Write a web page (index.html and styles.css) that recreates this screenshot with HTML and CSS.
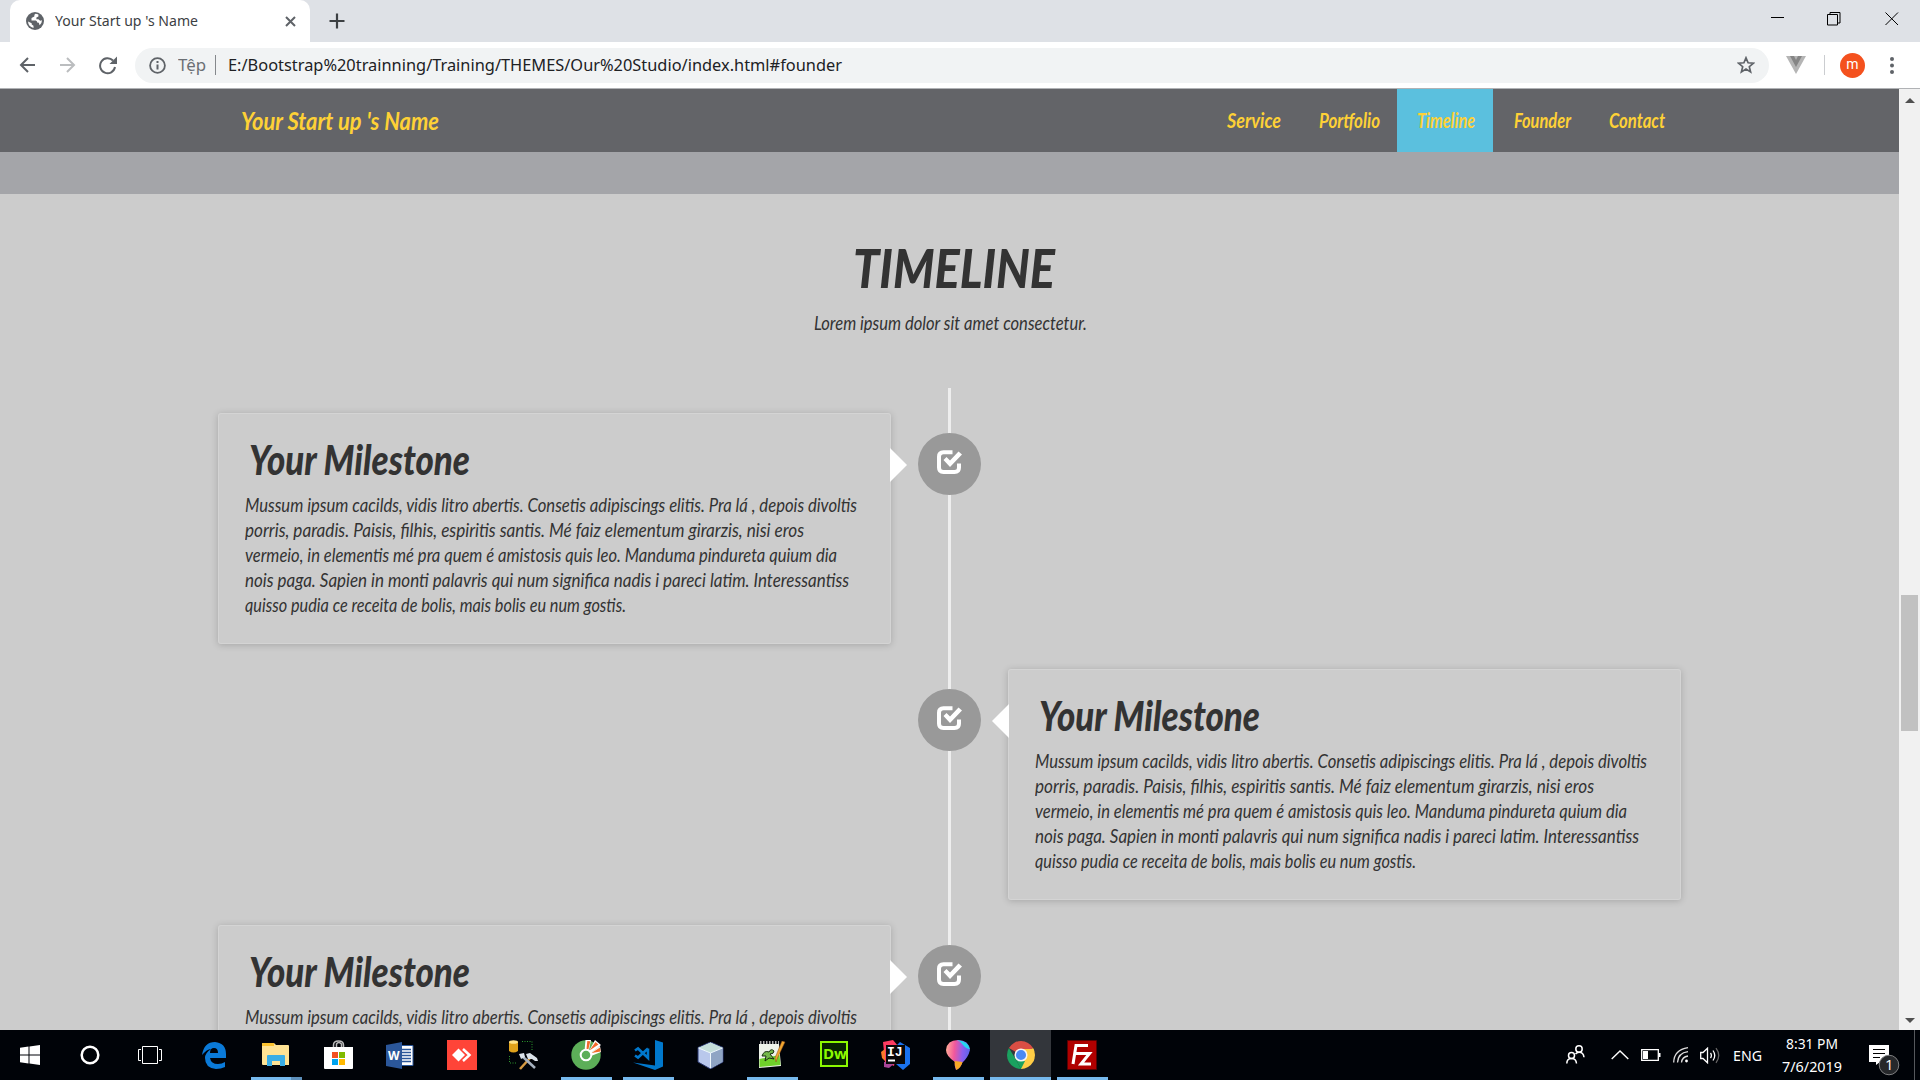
FILE: index.html
```html
<!DOCTYPE html>
<html lang="en">
<head>
<meta charset="utf-8">
<title>Your Start up 's Name</title>
<link rel="stylesheet" href="styles.css">
</head>
<body>
<svg width="0" height="0" class="defs">
  <symbol id="check" viewBox="0 0 26 24"><path d="M15.500 2.300H6.500Q2 2.300 2 6.800v10.700Q2 22 6.500 22h11Q22 22 22 17.500v-4" fill="none" stroke="#fff" stroke-width="4"/><path d="M6.500 10l3-3 3.500 3.500 8.500-9 3.500 3L13 17z" fill="#fff"/></symbol>
</svg>

<header class="tabstrip">
  <div class="tab">
    <svg width="18" height="18" viewBox="0 0 18 18"><circle cx="9" cy="9" r="9" fill="#5f6368"/><path d="M9.500 1.800Q8 2.500 8.300 4.500L5.500 6v2.500h4.200q1.500.3 1.500 2l1.600.2.800 2.500q2.400-2 2.400-5l-1.800.6-1.800-1.600h-2V5.500l2-1V2.600Q11 1.900 9.500 1.800zM2 9.500q.3 5.200 5.500 6.500V13.800L5.700 12.500v-1.300z" fill="#fff"/></svg>
    <span class="fit tab-title" data-w="143">Your Start up 's Name</span>
    <svg class="tab-close" width="11" height="11" viewBox="0 0 11 11"><path d="M1 1l9 9M10 1l-9 9" stroke="#5f6368" stroke-width="2"/></svg>
  </div>
  <svg class="plus" width="16" height="16" viewBox="0 0 16 16"><path d="M8 .5v15M.5 8h15" stroke="#3c4043" stroke-width="2.200"/></svg>
  <svg class="winctl" width="128" height="14" viewBox="0 0 128 14" fill="none" stroke="#000"><path d="M0 5.500h13M56.500 2.500h10v10.500h-10zM59 2.500v-2h10v10.500h-2.500M114.500.5l12.500 12.500M127 .5L114.500 13"/></svg>
</header>

<div class="toolbar">
  <svg class="arrows" width="98" height="20" viewBox="0 0 98 20" fill="none" stroke="#5f6368" stroke-width="2"><path d="M16 10H2M9 3l-7 7 7 7"/><path stroke="#bbbdbf" d="M41 10h14M48 3l7 7-7 7"/><path d="M94 5.500A7.500 7.500 0 1 0 96 12"/><path d="M98 1.500V9h-7.500z" fill="#5f6368" stroke="none"/></svg>
  <div class="omnibox">
    <svg width="17" height="17" viewBox="0 0 17 17"><circle cx="8.500" cy="8.500" r="7.400" fill="none" stroke="#5f6368" stroke-width="1.800"/><path d="M8.500 4v2M8.500 7.500v5" stroke="#5f6368" stroke-width="2"/></svg>
    <span class="fit scheme" data-w="28">Tệp</span>
    <i class="bar"></i>
    <span class="fit url" data-w="614">E:/Bootstrap%20trainning/Training/THEMES/Our%20Studio/index.html#founder</span>
    <svg class="star" width="18" height="18" viewBox="0 0 18 18"><path d="M9 1.800l2.100 5 5.300.4-4.100 3.500 1.300 5.200L9 13.100l-4.600 2.800 1.300-5.200L1.600 7.200l5.300-.4z" fill="none" stroke="#5f6368" stroke-width="1.700"/></svg>
  </div>
  <svg class="vue" width="20" height="18" viewBox="0 0 20 18"><path d="M0 0h20L10 18z" fill="#b5b5b5"/><path d="M4 0h4l2 4 2-4h4l-6 11z" fill="#858585"/></svg>
  <i class="split"></i>
  <b class="avatar">m</b>
  <svg class="dots" width="4" height="17" viewBox="0 0 4 17" fill="#5f6368"><circle cx="2" cy="2" r="2"/><circle cx="2" cy="8.500" r="2"/><circle cx="2" cy="15" r="2"/></svg>
</div>

<div class="viewport">
  <main class="page">
    <nav class="navbar">
      <span class="fit brand" data-w="198">Your Start up 's Name</span>
      <div class="links">
        <a class="link"><span class="fit" data-w="54">Service</span></a>
        <a class="link"><span class="fit" data-w="61">Portfolio</span></a>
        <a class="link active"><span class="fit" data-w="58">Timeline</span></a>
        <a class="link"><span class="fit" data-w="57">Founder</span></a>
        <a class="link"><span class="fit" data-w="56">Contact</span></a>
      </div>
    </nav>
    <div class="band"></div>
    <section class="section">
      <h2><span class="fit" data-w="202">TIMELINE</span></h2>
      <p class="lead"><span class="fit" data-w="273">Lorem ipsum dolor sit amet consectetur.</span></p>
      <div class="timeline">
        <div class="row">
          <article class="card">
            <h3><span class="fit" data-w="221">Your Milestone</span></h3>
            <p><span class="fit" data-w="612">Mussum ipsum cacilds, vidis litro abertis. Consetis adipiscings elitis. Pra lá , depois divoltis</span><br><span class="fit" data-w="559">porris, paradis. Paisis, filhis, espiritis santis. Mé faiz elementum girarzis, nisi eros</span><br><span class="fit" data-w="592">vermeio, in elementis mé pra quem é amistosis quis leo. Manduma pindureta quium dia</span><br><span class="fit" data-w="604">nois paga. Sapien in monti palavris qui num significa nadis i pareci latim. Interessantiss</span><br><span class="fit" data-w="381">quisso pudia ce receita de bolis, mais bolis eu num gostis.</span></p>
          </article>
          <div class="badge"><svg width="26" height="24"><use href="#check"/></svg></div>
        </div>
        <div class="row right">
          <article class="card">
            <h3><span class="fit" data-w="221">Your Milestone</span></h3>
            <p><span class="fit" data-w="612">Mussum ipsum cacilds, vidis litro abertis. Consetis adipiscings elitis. Pra lá , depois divoltis</span><br><span class="fit" data-w="559">porris, paradis. Paisis, filhis, espiritis santis. Mé faiz elementum girarzis, nisi eros</span><br><span class="fit" data-w="592">vermeio, in elementis mé pra quem é amistosis quis leo. Manduma pindureta quium dia</span><br><span class="fit" data-w="604">nois paga. Sapien in monti palavris qui num significa nadis i pareci latim. Interessantiss</span><br><span class="fit" data-w="381">quisso pudia ce receita de bolis, mais bolis eu num gostis.</span></p>
          </article>
          <div class="badge"><svg width="26" height="24"><use href="#check"/></svg></div>
        </div>
        <div class="row">
          <article class="card">
            <h3><span class="fit" data-w="221">Your Milestone</span></h3>
            <p><span class="fit" data-w="612">Mussum ipsum cacilds, vidis litro abertis. Consetis adipiscings elitis. Pra lá , depois divoltis</span></p>
          </article>
          <div class="badge"><svg width="26" height="24"><use href="#check"/></svg></div>
        </div>
      </div>
    </section>
  </main>
  <aside class="scrollbar">
    <svg width="10" height="5" viewBox="0 0 10 5"><path d="M0 5l5-5 5 5z" fill="#505050"/></svg>
    <i class="thumb"></i>
    <svg width="10" height="5" viewBox="0 0 10 5"><path d="M0 0l5 5 5-5z" fill="#505050"/></svg>
  </aside>
</div>

<footer class="taskbar">
  <div class="slot sys"><svg width="20" height="20" viewBox="0 0 20 20" fill="#fff"><path d="M0 2.800l8.500-1.200v8H0zM9.500 1.400L20 0v9.600H9.500zM0 10.500h8.500v8L0 17.300zM9.500 10.500H20V20L9.500 18.600z"/></svg></div>
  <div class="slot sys"><svg width="20" height="20" viewBox="0 0 20 20"><circle cx="10" cy="10" r="8.300" fill="none" stroke="#fff" stroke-width="2.500"/></svg></div>
  <div class="slot view"><svg width="24" height="18" viewBox="0 0 24 18" fill="none" stroke="#fff"><path d="M4.500.5h15v17h-15zM3 3.500H.5v11H3M21 3.500h2.500v11H21"/></svg></div>
  <div class="slot"><svg width="26" height="27" viewBox="0 0 26 27"><path d="M1 13Q3 0 14 0q11 1 11 12v4H9q1 6 8 6 4 0 7-2v5q-4 2-9 2Q4 26 4 16q0-5 6-9-4 0-9 6zM9 11h8q0-5-4-5-4 0-4 5z" fill="#0a7ad8"/></svg></div>
  <div class="slot open multi"><svg width="28" height="24" viewBox="0 0 28 24"><path d="M0 1q0-1 1-1h11l2 2h12q1 0 1 1v19H1q-1 0-1-1z" fill="#ffe394"/><path d="M0 1q0-1 1-1h11v3H0z" fill="#fcc32f"/><path d="M5 23V13q0-1 1-1h16q1 0 1 1v10h-5v-5h-8v5z" fill="#3aaee6"/></svg></div>
  <div class="slot"><svg width="29" height="30" viewBox="0 0 29 30"><path d="M9.500 8V5q0-4 5-4t5 4v3M12.500 7V4q2-3 5 0v4" fill="none" stroke="#bbb" stroke-width="1.500"/><path d="M0 7h29v21q0 1-1 1H1q-1 0-1-1z" fill="#fff"/><path d="M8 12h6v6H8z" fill="#f25022"/><path d="M15 12h6v6h-6z" fill="#7fba00"/><path d="M8 19h6v6H8z" fill="#00a4ef"/><path d="M15 19h6v6h-6z" fill="#ffb900"/></svg></div>
  <div class="slot"><svg width="28" height="27" viewBox="0 0 28 27"><path d="M13 3.500h14v20H13z" fill="#fff" stroke="#2b579a"/><path d="M16 7.500h9M16 10.500h9M16 13.500h9M16 16.500h9M16 19.500h9" stroke="#2b579a" stroke-width="1.500"/><path d="M0 3l16-3v27L0 24z" fill="#2b579a"/><text x="2" y="18" class="t-word">W</text></svg></div>
  <div class="slot"><svg width="30" height="30" viewBox="0 0 30 30"><path d="M0 0h30v30H0z" fill="#ff4438"/><path d="M5 15l6.500-6.500L18 15l-6.500 6.500z" fill="#fff"/><path d="M16 9l6.500 6-6.500 6" fill="none" stroke="#fff" stroke-width="2.500"/></svg></div>
  <div class="slot"><svg width="30" height="30" viewBox="0 0 30 30"><path d="M0 2v9q4.500 3 9 0V2z" fill="#e0a21b"/><ellipse cx="4.500" cy="2" rx="4.500" ry="1.800" fill="#ffe48b"/><path d="M13 1.500h10v10M.5 16v7h8" fill="none" stroke="#2d9a2d" stroke-dasharray="1 1.500"/><path d="M11 29l10-11" stroke="#d59a42" stroke-width="2.500"/><path d="M13 16l13 12" stroke="#a6b2c0" stroke-width="2.500"/><path d="M17 14l4-1 7 5 1 3-3 0-3-2-4 0z" fill="#dbe2ea"/><path d="M10 14l2 5 4-2-1-4z" fill="#dbe2ea"/></svg></div>
  <div class="slot open"><svg width="30" height="30" viewBox="0 0 30 30"><circle cx="15" cy="15" r="14.700" fill="#5cae58"/><path d="M13.500 11L14.500 0h5.500l-2 10zM18 11l6-11 6 5-10 8zM19 14l10-8 1 6-10 4z" fill="#fff"/><path d="M15.500 9l.8-8 3 .3-2 8.500zM18.500 10.500l6-8.500 3 2.500zM20.500 13l8.500-5.500.5 4z" fill="#f26a2a"/><circle cx="15" cy="15" r="5.300" fill="#5cae58" stroke="#fff" stroke-width="2"/></svg></div>
  <div class="slot open"><svg width="30" height="30" viewBox="0 0 30 30"><path d="M22 0l8 2.500v24L22 30 0 22.500l22 3z" fill="#0078cc"/><path d="M15 8.500L5 17.500 2 15.500M2 10.500l3-2 10 9.500V8.500" fill="none" stroke="#0078cc" stroke-width="2.600"/></svg></div>
  <div class="slot"><svg width="27" height="27" viewBox="0 0 27 27"><path d="M13.500 0L26 5.500V20l-12.500 7L1 20V5.500z" fill="#b9c8ec" stroke="#28366c"/><path d="M1.500 5.700l12 5.300 12-5.300L13.500.6z" fill="#c4deda"/><path d="M13.500 11l12-5.300V20l-12 6.500z" fill="#8fa5c4"/><path d="M13.500 11v15M1.500 6l12 5 12-5" fill="none" stroke="#edf7fc"/></svg></div>
  <div class="slot open"><svg width="28" height="28" viewBox="0 0 28 28"><path d="M1 3h20l2 22-22 2z" fill="#eef3ea"/><path d="M1.500 18l20-4 1 10-21 2z" fill="#6fd02a"/><path d="M2 1.500h19" stroke="#aaa" stroke-width="3" stroke-dasharray="1.500 1.500"/><path d="M4 15q2-6 7-4 2-4 5-1 0 3-4 3l4 5-5-1-4 3 1-5z" fill="#74b84a" stroke="#182f10"/><path d="M27 1l-8 17-1 3-1-4 7-17z" fill="#efa630" stroke="#8c4a1a" stroke-width=".5"/></svg></div>
  <div class="slot"><svg class="up" width="28" height="26" viewBox="0 0 28 26"><path d="M1 1h26v24H1z" fill="#072401" stroke="#8cfa00" stroke-width="2"/><text x="3" y="18" class="t-dw">Dw</text></svg></div>
  <div class="slot"><svg width="30" height="30" viewBox="0 0 30 30"><path d="M2 2l10-2 5 6-4 20-9-4z" fill="#fb3c62"/><path d="M0 12l4-3v12l-3-3z" fill="#fa7a2a"/><path d="M15 6l4-4 10 6 0 16-7 6-7-6z" fill="#1a72ee"/><path d="M3 22h12l-7 6-5-1z" fill="#a84598"/><path d="M5 5h19v19H5z" fill="#080808"/><path d="M7 20.500h7" stroke="#fff" stroke-width="2"/><text x="6" y="16" class="t-ij">IJ</text></svg></div>
  <div class="slot open"><svg width="24" height="30" viewBox="0 0 24 30"><defs><linearGradient id="drop" x1="0" y1=".3" x2="1" y2=".4"><stop offset="0" stop-color="#ffab96"/><stop offset=".35" stop-color="#f2589b"/><stop offset=".7" stop-color="#8a5ff0"/><stop offset="1" stop-color="#5a65e8"/></linearGradient></defs><path d="M12 0q11 0 12 10-2 8-8 13-1 4-6 7-2-5-1-8Q0 16 0 10 1 0 12 0z" fill="url(#drop)"/><path d="M11 0q11 1 13 9-4 0-7-4t-6-5z" fill="#25d6ef"/><path d="M8.500 21l8 1q-1 5-6 8-2-4-2-9z" fill="#f9a825"/></svg></div>
  <div class="slot open current"><svg width="28" height="28" viewBox="0 0 28 28"><path d="M14 14L1.900 7A14 14 0 0 1 26.100 7z" fill="#da4e44"/><path d="M14 14L26.100 7A14 14 0 0 1 14 28z" fill="#ffcd46"/><path d="M14 28A14 14 0 0 1 1.900 7L8 17z" fill="#1aa15f"/><path d="M14 8h12.600q1.400 6 0 12L14 28l5-10z" fill="#ffcd46"/><path d="M8 17l6 3 4 0-4 8z" fill="#1aa15f"/><circle cx="14" cy="14" r="5.800" fill="#4a89f3" stroke="#f4f4f4" stroke-width="1.500"/></svg></div>
  <div class="slot open"><svg width="30" height="30" viewBox="0 0 30 30"><path d="M.5.5h29v29H.5z" fill="#b00000" stroke="#5a0000" stroke-dasharray="2 1"/><path d="M6 24L9 5.500h12M8 13.500h9M13.500 13.500h9L14 24h10" fill="none" stroke="#fff" stroke-width="3"/></svg></div>
  <div class="tray">
    <svg class="people" width="19" height="19" viewBox="0 0 19 19" fill="none" stroke="#fff" stroke-width="1.500"><circle cx="13" cy="4" r="3.200"/><circle cx="5.500" cy="10.500" r="3"/><path d="M.8 18.500q0-5 4.700-5t5 5M9.500 9Q11 7.200 13 7.200q4.500 0 5 5"/></svg>
    <svg class="chev" width="18" height="10" viewBox="0 0 18 10"><path d="M.7 9L9 1l8.300 8" fill="none" stroke="#fff" stroke-width="1.400"/></svg>
    <svg class="batt" width="20" height="12" viewBox="0 0 20 12"><path d="M.7.7h16.600v10.600H.7z" fill="none" stroke="#fff" stroke-width="1.300"/><path d="M2 2h5v8H2zM18 4h1.500v4H18z" fill="#fff"/></svg>
    <svg class="wifi" width="16" height="16" viewBox="0 0 16 16" fill="none" stroke="#ddd" stroke-width="1.300"><path d="M.7 15.500Q1 3 15 .7M4.500 15.500Q5 6 15 4.700M8.500 15.500Q9 10 15 9"/><circle cx="13.500" cy="14" r="1.400" fill="#fff" stroke="none"/></svg>
    <svg class="vol" width="20" height="17" viewBox="0 0 20 17" fill="none" stroke="#fff" stroke-width="1.300"><path d="M.7 5.500H3l4.500-4.300v14.600L3 11.500H.7zM10.500 6q1.800 2.500 0 5M13 3.500q3.500 5 0 10"/><path stroke="#666" d="M16 1.200q5.500 7.300 0 14.600"/></svg>
    <span class="fit lang" data-w="29">ENG</span>
    <div class="clock"><span class="fit" data-w="52">8:31 PM</span><span class="fit" data-w="60">7/6/2019</span></div>
    <svg class="note" width="31" height="31" viewBox="0 0 31 31"><path d="M0 0h20v17h-9l-4 3v-3H0z" fill="#fff"/><path d="M4 4.500h12M4 8.500h12M4 12.500h7" stroke="#000"/><circle cx="20" cy="20" r="9.800" fill="#26282b" stroke="#7e7f81"/><text x="16" y="25" class="t-note">1</text></svg>
  </div>
</footer>
<script src="fit.js"></script>
</body>
</html>
```
FILE: styles.css
```css
* { box-sizing: border-box; }
body { margin: 0; width: 1920px; height: 1080px; overflow: hidden; display: flex; flex-direction: column; font-family: "Noto Sans", sans-serif; background: #fff; }
svg { display: block; flex: none; }
.defs { display: none; }
.fit { display: inline-block; white-space: nowrap; transform-origin: 0 50%; flex: none; }

.tabstrip { flex: none; height: 42px; background: #dee1e6; display: flex; align-items: center; padding-left: 10px; }
.tab { width: 300px; height: 42px; background: #fff; border-radius: 10px 10px 0 0; display: flex; align-items: center; padding: 0 14px 0 16px; }
.tab-title { margin: -2px 0 0 11px; font-size: 14.5px; color: #3c4043; }
.tab-close { margin-left: auto; }
.plus { margin-left: 19px; }
.winctl { margin: -4px 21px 0 auto; }

.toolbar { flex: none; height: 47px; border-bottom: 1px solid #b0b2b5; display: flex; align-items: center; padding: 0 26px 0 19px; }
.arrows { margin-top: -1px; }
.omnibox { width: 1634px; height: 35px; margin-left: 18px; border-radius: 18px; background: #f1f3f4; display: flex; align-items: center; padding: 0 14px; }
.scheme { margin: -2px 0 0 12px; font-size: 17px; color: #6b6f74; }
.bar { width: 1px; height: 20px; margin: 0 12px 0 9px; background: #85888c; }
.url { margin-top: -2px; font-size: 17px; color: #202124; }
.star { margin-left: auto; }
.vue { margin-left: 17px; }
.split { width: 1px; height: 20px; margin: 0 15px 0 18px; background: #cbcdd0; }
.avatar { width: 25px; height: 25px; border-radius: 50%; background: #f4511e; color: #fff; font: 14px/23px Roboto, sans-serif; text-align: center; }
.dots { margin-left: auto; }

.viewport { flex: none; height: 941px; display: flex; overflow: hidden; }
.page { width: 1899px; background: #ccc; overflow: hidden; color: #333; font-family: Lato, sans-serif; font-style: italic; }
.navbar { height: 63px; background: #636468; display: flex; align-items: center; justify-content: space-between; padding: 0 215px 0 241px; color: #fed136; font-weight: 700; }
.brand { font-size: 25px; margin-top: -2px; }
.links { display: flex; font-size: 20px; }
.link { height: 63px; padding: 0 19px 1px; display: flex; align-items: center; }
.active { background: #5bc0de; padding: 0 18px 1px 20px; margin: 0 2px 0 -2px; }
.band { height: 42px; background: #a4a5a9; }
.section { display: flex; flex-direction: column; align-items: center; padding-top: 42px; }
.section h2 { margin: 0 -9px 0 0; font-size: 53px; line-height: 64px; font-weight: 900; }
.lead { margin: 10px -2px 0 0; font-size: 19px; line-height: 26px; }
.timeline { width: 1463px; margin-top: 52px; padding-top: 25px; background: linear-gradient(#eee, #eee) center / 3px 100% no-repeat; }
.row { display: grid; grid-template-columns: 673px 117px 673px; height: 231px; margin-bottom: 25px; }
.card { position: relative; grid-area: 1 / 1; height: 231px; border: 1px solid #d4d4d4; border-radius: 3px; padding: 22px 26px; box-shadow: 0 1px 7px rgba(0, 0, 0, .19); }
.right .card { grid-area: 1 / 3; }
.card::after { content: ""; position: absolute; top: 34px; right: -17px; border: 17.5px solid transparent; border-left: 17px solid #fff; border-right: 0; }
.right .card::after { right: auto; left: -17px; border-right: 17px solid #fff; border-left: 0; }
.card h3 { margin: 0 0 0 4px; height: 48px; font-size: 41px; line-height: 48px; font-weight: 900; }
.card p { margin: 8px 0 0; font-size: 19px; line-height: 25px; }
.card p .fit { vertical-align: top; }
.badge { grid-area: 1 / 2; justify-self: center; margin-top: 20px; width: 63px; height: 62px; border-radius: 50%; background: #999; display: flex; justify-content: center; padding-top: 17px; }

.scrollbar { width: 21px; background: #f1f1f1; display: flex; flex-direction: column; align-items: center; padding: 9px 0 7px; }
.thumb { width: 17px; height: 136px; margin: 492px 0 auto; background: #c1c1c1; }

.taskbar { flex: none; height: 50px; background: #000308; display: flex; color: #fff; }
.slot { width: 62px; height: 50px; display: flex; align-items: center; justify-content: center; }
.sys { width: 60px; }
.view { width: 63px; padding-right: 3px; }
.open { background: linear-gradient(#76b9ed, #76b9ed) center bottom / 51px 3px no-repeat; }
.multi { background: linear-gradient(90deg, #76b9ed 40px, #5d8fba 40px) center bottom / 51px 3px no-repeat; }
.current { width: 61px; margin-left: 1px; background: linear-gradient(#76b9ed, #76b9ed) center bottom / 100% 3px no-repeat #33363b; }
.up { margin-top: -3px; }
.tray { flex: 1; display: flex; align-items: center; margin-right: 5px; border-right: 1px solid #55585c; }
.people { margin: -2px 0 0 453px; }
.chev { margin-left: 26px; }
.batt { margin-left: 12px; }
.wifi { margin-left: 12px; }
.vol { margin-left: 11px; }
.lang { margin-left: 13px; font-size: 15px; }
.clock { width: 60px; margin: -1px 0 0 20px; display: flex; flex-direction: column; align-items: center; font-size: 15px; line-height: 23px; }
.note { margin: 10px 0 0 27px; }
svg text { font-family: "Open Sans", sans-serif; font-weight: 700; fill: #fff; }
.t-word { font-size: 12px; }
.t-dw { font-size: 15px; fill: #8cfa00; }
.t-ij { font: 700 13px "Liberation Mono", monospace; }
.t-note { font-size: 15px; font-weight: 400; }
```
FILE: fit.js
```js
// Condense each label to its set width while keeping its font size.
document.querySelectorAll('.fit').forEach(function (el) {
  var natural = el.getBoundingClientRect().width;
  var wanted = Number(el.dataset.w);
  el.style.transform = 'scaleX(' + wanted / natural + ')';
  el.style.marginRight = wanted - natural + 'px';
});
```
